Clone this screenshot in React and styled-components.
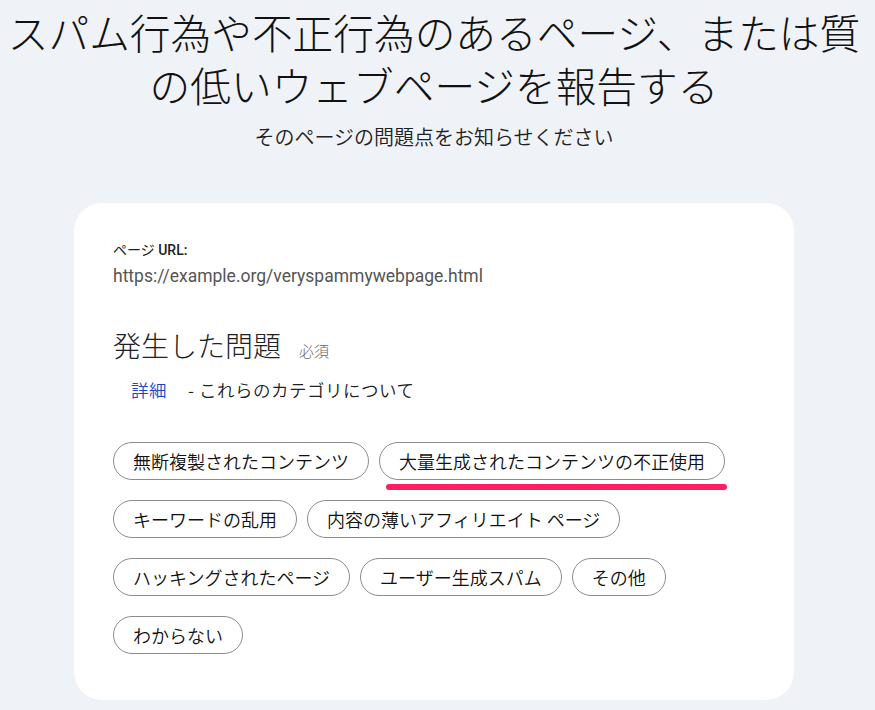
import React from 'react'
import styled, { createGlobalStyle } from 'styled-components'

const GlobalStyle = createGlobalStyle`
  html, body {
    margin: 0;
    padding: 0;
    background: #eff2f7;
  }
  body {
    font-family: Roboto, 'Noto Sans CJK JP', sans-serif;
    color: #202124;
  }
`

const Page = styled.div`
  width: 868px;
  height: 710px;
  overflow: hidden;
  display: flex;
  flex-direction: column;
  align-items: center;
`

const Title = styled.h1`
  margin: 5px 0 0;
  font-family: 'Noto Sans CJK JP', sans-serif;
  font-size: 40.7px;
  line-height: 53px;
  font-weight: 300;
  text-align: center;
  white-space: nowrap;
  color: #111;
`

const Subtitle = styled.p`
  margin: 12px 0 0;
  font-family: 'Noto Sans CJK JP', sans-serif;
  font-size: 20px;
  line-height: 28px;
  font-weight: 350;
  color: #202124;
`

const Card = styled.section`
  margin-top: 52px;
  width: 720px;
  height: 497px;
  box-sizing: border-box;
  padding: 38px 39px 40px;
  background: #fff;
  border-radius: 28px;
  flex: none;
`

const Label = styled.div`
  font-size: 14px;
  line-height: 18px;
  color: #202124;

  b {
    font-weight: 500;
  }
`

const Url = styled.div`
  margin-top: 6px;
  font-size: 17.5px;
  line-height: 22px;
  color: #555;
`

const Heading = styled.div`
  margin-top: 39px;
  display: flex;
  align-items: baseline;
  gap: 18px;
`

const HeadingText = styled.h2`
  margin: 0;
  font-family: 'Noto Sans CJK JP', sans-serif;
  font-size: 28px;
  line-height: 38px;
  font-weight: 300;
`

const Required = styled.span`
  font-family: 'Noto Sans CJK JP', sans-serif;
  font-size: 15px;
  font-weight: 300;
  color: #666;
`

const Help = styled.div`
  margin-top: 14px;
  padding-left: 18px;
  display: flex;
  gap: 21px;
  font-family: 'Noto Sans CJK JP', sans-serif;
  font-size: 17.5px;
  line-height: 24px;
  font-weight: 350;
  letter-spacing: 0.5px;
`

const Link = styled.a`
  color: #1847c9;
  text-decoration: none;
`

const Chips = styled.div`
  margin-top: 40px;
  display: flex;
  flex-wrap: wrap;
  column-gap: 10px;
  row-gap: 20px;
`

const Chip = styled.button`
  position: relative;
  height: 38px;
  padding: 0 19px;
  border: 1.5px solid #8c8c8c;
  border-radius: 19px;
  background: #fff;
  font-family: 'Noto Sans CJK JP', sans-serif;
  font-size: 18px;
  font-weight: 350;
  color: #111;
  white-space: nowrap;
  cursor: pointer;
`

const Highlight = styled.span`
  position: absolute;
  left: 6px;
  right: -3px;
  bottom: -11px;
  height: 6px;
  border-radius: 3px;
  background: #fe1f63;
`

const issues = [
  '無断複製されたコンテンツ',
  '大量生成されたコンテンツの不正使用',
  'キーワードの乱用',
  '内容の薄いアフィリエイト ページ',
  'ハッキングされたページ',
  'ユーザー生成スパム',
  'その他',
  'わからない',
]

const App = () => (
  <Page>
    <GlobalStyle />
    <Title>
      スパム行為や不正行為のあるページ、または質
      <br />
      の低いウェブページを報告する
    </Title>
    <Subtitle>そのページの問題点をお知らせください</Subtitle>
    <Card>
      <Label>
        ページ <b>URL:</b>
      </Label>
      <Url>https://example.org/veryspammywebpage.html</Url>
      <Heading>
        <HeadingText>発生した問題</HeadingText>
        <Required>必須</Required>
      </Heading>
      <Help>
        <Link href="#">詳細</Link>
        <span>- これらのカテゴリについて</span>
      </Help>
      <Chips>
        {issues.map((issue, i) => (
          <Chip key={issue}>
            {issue}
            {i === 1 && <Highlight />}
          </Chip>
        ))}
      </Chips>
    </Card>
  </Page>
)

export default App
